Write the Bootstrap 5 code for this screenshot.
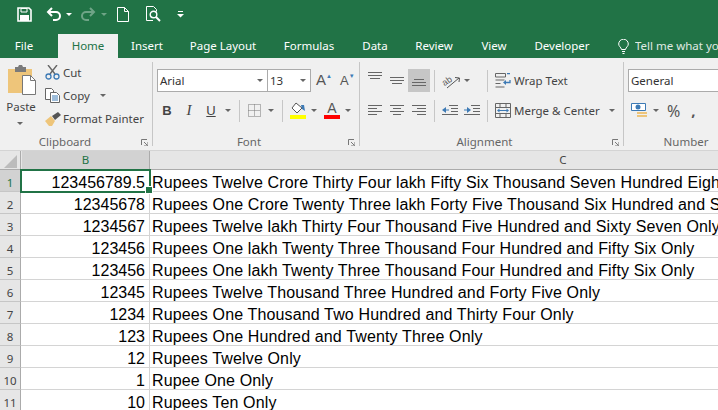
<!DOCTYPE html>
<html lang="en">
<head>
<meta charset="UTF-8">
<title>Excel</title>
<link href="https://cdn.jsdelivr.net/npm/bootstrap@5.3.2/dist/css/bootstrap.min.css" rel="stylesheet">
<style>
body { width: 718px; height: 410px; overflow: hidden; background: #fff; font-family: "Noto Sans", sans-serif; font-size: 11.5px; color: #444; }
svg { display: block; flex: none; }
.nw { white-space: nowrap; }
/* small offsets between ribbon items */
.l2 { margin-left: 2px; } .l3 { margin-left: 3px; } .l4 { margin-left: 4px; } .l5 { margin-left: 5px; } .l6 { margin-left: 6px; }
.l7 { margin-left: 7px; } .l8 { margin-left: 8px; } .l9 { margin-left: 9px; } .l10 { margin-left: 10px; } .l14 { margin-left: 14px; }
.l16 { margin-left: 16px; } .l17 { margin-left: 17px; } .l18 { margin-left: 18px; }

.qat { height: 34px; background: #217346; padding: 0 0 6px 17px; }
.tabs { height: 24px; background: #217346; color: #fff; }
.tab-item { height: 24px; line-height: 24px; text-align: center; flex: none; }
.tab-on { background: #f0f0f0; color: #217346; }
.t-file { width: 58px; padding-right: 10px; } .t-home { width: 60px; } .t-ins { width: 58px; } .t-page { width: 94px; }
.t-form { width: 78px; } .t-data { width: 54px; } .t-rev { width: 64px; } .t-view { width: 56px; } .t-dev { width: 80px; }
.t-tell { padding-left: 16px; }
.tell-txt { opacity: .85; margin-left: 6px; white-space: nowrap; }
.dim { opacity: .35; }
.drop-w { border-top-color: #fff !important; }

.ribbon { height: 93px; background: #f0f0f0; border-bottom: 1px solid #d4d4d4; overflow: hidden; }
.rb-group { flex: none; height: 84px; margin-top: 4px; position: relative; border-right: 1px solid #c6c6c6; }
.g-clip { width: 153px; } .g-font { width: 207px; padding-left: 4px; } .g-align { width: 264px; padding-left: 8px; } .g-num { width: 94px; padding-left: 4px; border-right: 0; }
.rb-label { position: absolute; left: 0; right: 14px; bottom: -3px; text-align: center; color: #666; line-height: 14px; }
.lb-clip { right: 22px; }
.lb-num { right: -30px; }
.launch { position: absolute; right: 4px; bottom: 0; }
.rb-row { display: flex; align-items: center; height: 23px; }
.row-top { margin-top: 7px; }
.row-bot { margin-top: 7px; }
.vsep { width: 1px; height: 22px; background: #c6c6c6; flex: none; }
.drop { width: 0; height: 0; border-left: 3px solid transparent; border-right: 3px solid transparent; border-top: 3px solid #666; flex: none; }
.combo { height: 23px; background: #fff; border: 1px solid #ababab; display: flex; align-items: center; padding: 0 4px 0 2px; justify-content: space-between; flex: none; color: #333; }
.c-name { width: 111px; } .c-size { width: 44px; margin-left: -1px; } .c-num { width: 100px; }

.paste-col { width: 44px; flex: none; padding-left: 8px; }
.paste-ico { margin-top: 3px; }
.paste-txt { margin: 3px 0 0 -8px; width: 42px; text-align: center; }
.paste-drop { display: block; margin: 7px 0 0 9px; }
.clip-list { margin-top: -1px; }
.clip-ico { margin-left: 1px; margin-right: 1px; width: 17px; }

.grow-a { font-size: 15px; margin-left: 5px; width: 24px; color: #555; font-family: "Liberation Sans", sans-serif; }
.shrink-a { font-size: 13px; width: 18px; color: #555; font-family: "Liberation Sans", sans-serif; }
.grow-a sup, .shrink-a sup { font-size: 6px; color: #3d7ab5; top: -1.2em; }
.fmt { text-align: center; flex: none; font-family: "Liberation Sans", sans-serif; color: #444; font-size: 13px; }
.f-b { width: 20px; font-weight: 700; }
.f-i { width: 24px; font-style: italic; font-family: "Liberation Serif", serif; font-size: 15px; }
.f-u { width: 20px; text-decoration: underline; }
.swatch { width: 16px; flex: none; }
.bar-y { height: 4px; background: #ff0; margin-top: 1px; }
.bar-r { height: 4px; background: #f00; margin-top: 1px; }
.a-col { text-align: center; line-height: 12px; font-size: 14px; color: #555; font-family: "Liberation Sans", sans-serif; }

.up { margin-bottom: 9px; }
.on-box { width: 22px; height: 23px; background: #c6c6c6; margin-left: 4px; padding-bottom: 5px; flex: none; }

.pct { font-size: 16px; margin-left: 8px; color: #555; }
.comma { font-size: 15px; margin-left: 11px; font-weight: 700; color: #555; }

.sheet-head { height: 19px; background: #e6e6e6; display: flex; border-bottom: 1px solid #ababab; color: #444; }
.corner { width: 21px; flex: none; border-right: 1px solid #ababab; margin-right: 1px; position: relative; }
.corner::after { content: ""; position: absolute; right: 3px; bottom: 1px; border-left: 13px solid transparent; border-bottom: 13px solid #bcbcbc; }
.col-b { width: 128px; flex: none; background: #d2d2d2; border-right: 1px solid #ababab; text-align: center; color: #217346; line-height: 18px; }
.col-c { flex: 1; text-align: center; padding-left: 258px; line-height: 18px; }
.cell-row { display: flex; height: 22px; font-family: "Liberation Sans", Arial, sans-serif; font-size: 16px; color: #000; line-height: 25px; }
.row-no { width: 21px; flex: none; background: #e6e6e6; border-right: 1px solid #ababab; border-bottom: 1px solid #c6c6c6; font-family: "Noto Sans", sans-serif; font-size: 11.5px; color: #444; text-align: center; }
.row-sel { background: #d2d2d2; color: #217346; }
.cell-b { width: 129px; flex: none; text-align: right; padding-right: 4px; border-right: 1px solid #d4d4d4; border-bottom: 1px solid #d4d4d4; }
.cell-c { flex: 1; white-space: nowrap; overflow: hidden; padding-left: 2px; border-bottom: 1px solid #d4d4d4; letter-spacing: .14px; }
.sel-box { position: relative; outline: 2px solid #217346; outline-offset: -1px; }
.sel-box::after { content: ""; position: absolute; right: -4px; bottom: -3px; width: 6px; height: 6px; background: #217346; border: 1px solid #fff; box-sizing: content-box; }
</style>
</head>
<body>
<div class="qat d-flex align-items-center">
  <svg width="15" height="15" viewBox="0 0 15 15"><path d="M1 1h11l2 2v11H1z" fill="none" stroke="#fff" stroke-width="1.6"/><path d="M4 1.500h6v3.500H4z" fill="none" stroke="#fff"/><path d="M3 8h9v6H3z" fill="#fff"/></svg>
  <svg class="l14" width="15" height="14" viewBox="0 0 15 14"><path d="M6 1 2 5l4 4" fill="none" stroke="#fff" stroke-width="2"/><path d="M2 5h8a3.800 3.800 0 0 1 0 8H7" fill="none" stroke="#fff" stroke-width="2"/></svg>
  <span class="drop drop-w l5"></span>
  <svg class="l9 dim" width="15" height="14" viewBox="0 0 15 14"><path d="M9 1l4 4-4 4" fill="none" stroke="#fff" stroke-width="2"/><path d="M13 5H5a3.800 3.800 0 0 0 0 8h3" fill="none" stroke="#fff" stroke-width="2"/></svg>
  <span class="drop drop-w l5 dim"></span>
  <svg class="l10" width="12" height="15" viewBox="0 0 12 15"><path d="M.5.5h7l4 4v10H.5zM7.500.5v4h4" fill="none" stroke="#fff"/></svg>
  <svg class="l17" width="15" height="16" viewBox="0 0 15 16"><path d="M7 14.500H.5V.5h7l3 3v2" fill="none" stroke="#fff"/><circle cx="7.500" cy="8.500" r="3.300" fill="none" stroke="#fff" stroke-width="1.400"/><path d="M10 11l4 4" stroke="#fff" stroke-width="2"/></svg>
  <svg class="l16" width="7" height="8" viewBox="0 0 7 8"><path d="M1 1.500h5" stroke="#fff"/><path d="M0 4h7L3.500 7.500z" fill="#fff"/></svg>
</div>
<div class="tabs d-flex">
  <div class="tab-item t-file">File</div>
  <div class="tab-item tab-on t-home">Home</div>
  <div class="tab-item t-ins">Insert</div>
  <div class="tab-item t-page">Page Layout</div>
  <div class="tab-item t-form">Formulas</div>
  <div class="tab-item t-data">Data</div>
  <div class="tab-item t-rev">Review</div>
  <div class="tab-item t-view">View</div>
  <div class="tab-item t-dev">Developer</div>
  <div class="tab-item t-tell d-flex align-items-center">
    <svg width="11" height="15" viewBox="0 0 11 15"><path d="M3.500 10.500C3 8 .7 7.500.7 5a4.800 4.800 0 0 1 9.600 0c0 2.500-2.300 3-2.800 5.500zM4 12.500h3M4.500 14.500h2" fill="none" stroke="#fff"/></svg>
    <span class="tell-txt">Tell me what you want to do</span>
  </div>
</div>
<div class="ribbon d-flex">
  <div class="rb-group g-clip d-flex">
    <div class="paste-col">
      <svg class="paste-ico" width="28" height="30" viewBox="0 0 28 30"><path d="M0 4h24v24H0z" fill="#eec57a"/><path d="M7 2h3l1-2h3l1 2h3v5H7z" fill="#7a7a7a"/><path d="M14.500 10.500h8l5 5v14h-13z" fill="#fff" stroke="#777"/><path d="M22.500 10.500v5h5" fill="none" stroke="#777"/></svg>
      <div class="paste-txt">Paste</div>
      <span class="drop paste-drop"></span>
    </div>
    <div class="clip-list">
      <div class="rb-row">
        <span class="clip-ico"><svg width="15" height="15" viewBox="0 0 15 15"><path d="M3 0l7 9M12 0 5 9" stroke="#666" stroke-width="1.400" fill="none"/><circle cx="3.500" cy="11.500" r="2.500" fill="none" stroke="#3d7ab5" stroke-width="1.300"/><circle cx="11.500" cy="11.500" r="2.500" fill="none" stroke="#3d7ab5" stroke-width="1.300"/></svg></span>
        <span>Cut</span>
      </div>
      <div class="rb-row">
        <span class="clip-ico"><svg width="15" height="15" viewBox="0 0 15 15"><path d="M.5.500h6l2 2v9h-8z" fill="#fff" stroke="#666"/><path d="M5.500 4.500h6l3 3v7h-9z" fill="#fff" stroke="#666"/><path d="M7 8h6M7 10h6M7 12h6" stroke="#3d7ab5"/></svg></span>
        <span>Copy</span><span class="drop l10"></span>
      </div>
      <div class="rb-row">
        <span class="clip-ico"><svg width="16" height="14" viewBox="0 0 16 14"><path d="M0 9l6-5 4 5-3 5H4z" fill="#eec57a"/><path d="M7 4l6-4 3 3-6 5z" fill="#555"/></svg></span>
        <span class="nw">Format Painter</span>
      </div>
    </div>
    <div class="rb-label lb-clip">Clipboard</div>
    <svg class="launch" width="7" height="7" viewBox="0 0 7 7"><path d="M.5 6V.5H6M3 3l3.500 3.500M7 3v4H3" fill="none" stroke="#777"/></svg>
  </div>
  <div class="rb-group g-font">
    <div class="rb-row row-top">
      <div class="combo c-name"><span>Arial</span><span class="drop"></span></div>
      <div class="combo c-size"><span>13</span><span class="drop"></span></div>
      <span class="grow-a">A<sup>▲</sup></span>
      <span class="shrink-a">A<sup>▼</sup></span>
    </div>
    <div class="rb-row row-bot">
      <span class="fmt f-b">B</span>
      <span class="fmt f-i">I</span>
      <span class="fmt f-u">U</span>
      <span class="drop l4"></span>
      <span class="vsep l8"></span>
      <svg class="l8" width="13" height="13" viewBox="0 0 13 13"><path d="M.5.500h12v12H.5zM6.500.5v12M.5 6.500h12" fill="none" stroke="#777" stroke-dasharray="1 1"/></svg>
      <span class="drop l7"></span>
      <span class="vsep l8"></span>
      <div class="swatch l7">
        <svg width="16" height="12" viewBox="0 0 16 12"><path d="M6 1l6 5-5 5-5-5z" fill="#fff" stroke="#555"/><path d="M11 3h3l1 6-3-2z" fill="#3d7ab5"/></svg>
        <div class="bar-y"></div>
      </div>
      <span class="drop l5"></span>
      <div class="swatch a-col l7">A<div class="bar-r"></div></div>
      <span class="drop l5"></span>
    </div>
    <div class="rb-label">Font</div>
    <svg class="launch" width="7" height="7" viewBox="0 0 7 7"><path d="M.5 6V.5H6M3 3l3.500 3.500M7 3v4H3" fill="none" stroke="#777"/></svg>
  </div>
  <div class="rb-group g-align">
    <div class="rb-row row-top">
      <svg class="up" width="14" height="8" viewBox="0 0 14 8"><path d="M0 .5h14M0 3.500h14M2 6.500h10" stroke="#666"/></svg>
      <svg class="l8" width="14" height="8" viewBox="0 0 14 8"><path d="M0 .5h14M0 3.500h14M2 6.500h10" stroke="#666"/></svg>
      <div class="on-box d-flex justify-content-center align-items-end"><svg width="14" height="8" viewBox="0 0 14 8"><path d="M2 .5h10M0 3.500h14M0 6.500h14" stroke="#666"/></svg></div>
      <span class="vsep l4"></span>
      <svg class="l7" width="20" height="16" viewBox="0 0 20 16"><text x="0" y="11" font-family="Liberation Sans, sans-serif" font-size="9" fill="#555" transform="rotate(-35 5 8)">ab</text><path d="M5 15 17 5M13 4.500l4.500.5-.5 4" fill="none" stroke="#555"/></svg>
      <span class="drop l2"></span>
      <span class="vsep l17"></span>
      <svg class="l7" width="16" height="15" viewBox="0 0 16 15"><path d="M.5.500h10v3.500H.5zM.5 7h9M.5 10.500h5M.5 14h9" fill="none" stroke="#666"/><path d="M12 .5h3M15 7v2.500H10" fill="none" stroke="#3d7ab5" stroke-width="1.300"/><path d="M8 9.500l3-2.500v5z" fill="#3d7ab5"/></svg>
      <span class="l3 nw">Wrap Text</span>
    </div>
    <div class="rb-row row-bot">
      <svg width="14" height="11" viewBox="0 0 14 11"><path d="M0 .5h14M0 3.500h9M0 6.500h14M0 9.500h9" stroke="#666"/></svg>
      <svg class="l8" width="14" height="11" viewBox="0 0 14 11"><path d="M0 .5h14M3 3.500h8M0 6.500h14M3 9.500h8" stroke="#666"/></svg>
      <svg class="l8" width="14" height="11" viewBox="0 0 14 11"><path d="M0 .5h14M5 3.500h9M0 6.500h14M5 9.500h9" stroke="#666"/></svg>
      <span class="vsep l8"></span>
      <svg class="l7" width="16" height="11" viewBox="0 0 16 11"><path d="M7 .5h9M9 3.500h7M9 6.500h7M0 9.500h16" stroke="#666"/><path d="M0 5l4-3v6z" fill="#3d7ab5"/><path d="M3 5h4" stroke="#3d7ab5"/></svg>
      <svg class="l6" width="16" height="11" viewBox="0 0 16 11"><path d="M7 .5h9M9 3.500h7M9 6.500h7M0 9.500h16" stroke="#666"/><path d="M7 5L3 2v6z" fill="#3d7ab5"/><path d="M0 5h4" stroke="#3d7ab5"/></svg>
      <span class="vsep l7"></span>
      <svg class="l7" width="16" height="15" viewBox="0 0 16 15"><path d="M.5.500h15v14H.5zM.5 4.500h15M.5 10.500h15M5 .5v4M11 .5v4M5 10.500v4M11 10.500v4" fill="none" stroke="#666"/><path d="M3 7.500h10" stroke="#3d7ab5"/><path d="M2 7.500l2.500-2v4zM14 7.500l-2.500-2v4z" fill="#3d7ab5"/></svg>
      <span class="l3 nw">Merge &amp; Center</span>
      <span class="drop l9"></span>
    </div>
    <div class="rb-label">Alignment</div>
    <svg class="launch" width="7" height="7" viewBox="0 0 7 7"><path d="M.5 6V.5H6M3 3l3.500 3.500M7 3v4H3" fill="none" stroke="#777"/></svg>
  </div>
  <div class="rb-group g-num">
    <div class="rb-row row-top">
      <div class="combo c-num"><span>General</span></div>
    </div>
    <div class="rb-row row-bot">
      <svg class="l3" width="16" height="16" viewBox="0 0 16 16"><path d="M.5.500h14v7H.5z" fill="#fff" stroke="#3d7ab5"/><circle cx="7" cy="4" r="2.500" fill="#3d7ab5"/><path d="M6 9h10v2H6zM6 12h10v2H6z" fill="#eec57a"/></svg>
      <span class="drop l6"></span>
      <span class="pct">%</span>
      <span class="comma">,</span>
    </div>
    <div class="rb-label lb-num">Number</div>
  </div>
</div>
<div class="sheet-head">
  <div class="corner"></div>
  <div class="col-b">B</div>
  <div class="col-c">C</div>
</div>
<div class="cell-row"><div class="row-no row-sel">1</div><div class="cell-b sel-box">123456789.5</div><div class="cell-c">Rupees Twelve Crore Thirty Four lakh Fifty Six Thousand Seven Hundred Eighty Nine</div></div>
<div class="cell-row"><div class="row-no">2</div><div class="cell-b">12345678</div><div class="cell-c">Rupees One Crore Twenty Three lakh Forty Five Thousand Six Hundred and Seventy Eight</div></div>
<div class="cell-row"><div class="row-no">3</div><div class="cell-b">1234567</div><div class="cell-c">Rupees Twelve lakh Thirty Four Thousand Five Hundred and Sixty Seven Only</div></div>
<div class="cell-row"><div class="row-no">4</div><div class="cell-b">123456</div><div class="cell-c">Rupees One lakh Twenty Three Thousand Four Hundred and Fifty Six Only</div></div>
<div class="cell-row"><div class="row-no">5</div><div class="cell-b">123456</div><div class="cell-c">Rupees One lakh Twenty Three Thousand Four Hundred and Fifty Six Only</div></div>
<div class="cell-row"><div class="row-no">6</div><div class="cell-b">12345</div><div class="cell-c">Rupees Twelve Thousand Three Hundred and Forty Five Only</div></div>
<div class="cell-row"><div class="row-no">7</div><div class="cell-b">1234</div><div class="cell-c">Rupees One Thousand Two Hundred and Thirty Four Only</div></div>
<div class="cell-row"><div class="row-no">8</div><div class="cell-b">123</div><div class="cell-c">Rupees One Hundred and Twenty Three Only</div></div>
<div class="cell-row"><div class="row-no">9</div><div class="cell-b">12</div><div class="cell-c">Rupees Twelve Only</div></div>
<div class="cell-row"><div class="row-no">10</div><div class="cell-b">1</div><div class="cell-c">Rupee One Only</div></div>
<div class="cell-row"><div class="row-no">11</div><div class="cell-b">10</div><div class="cell-c">Rupees Ten Only</div></div>
<script src="https://cdn.jsdelivr.net/npm/bootstrap@5.3.2/dist/js/bootstrap.bundle.min.js"></script>
</body>
</html>
